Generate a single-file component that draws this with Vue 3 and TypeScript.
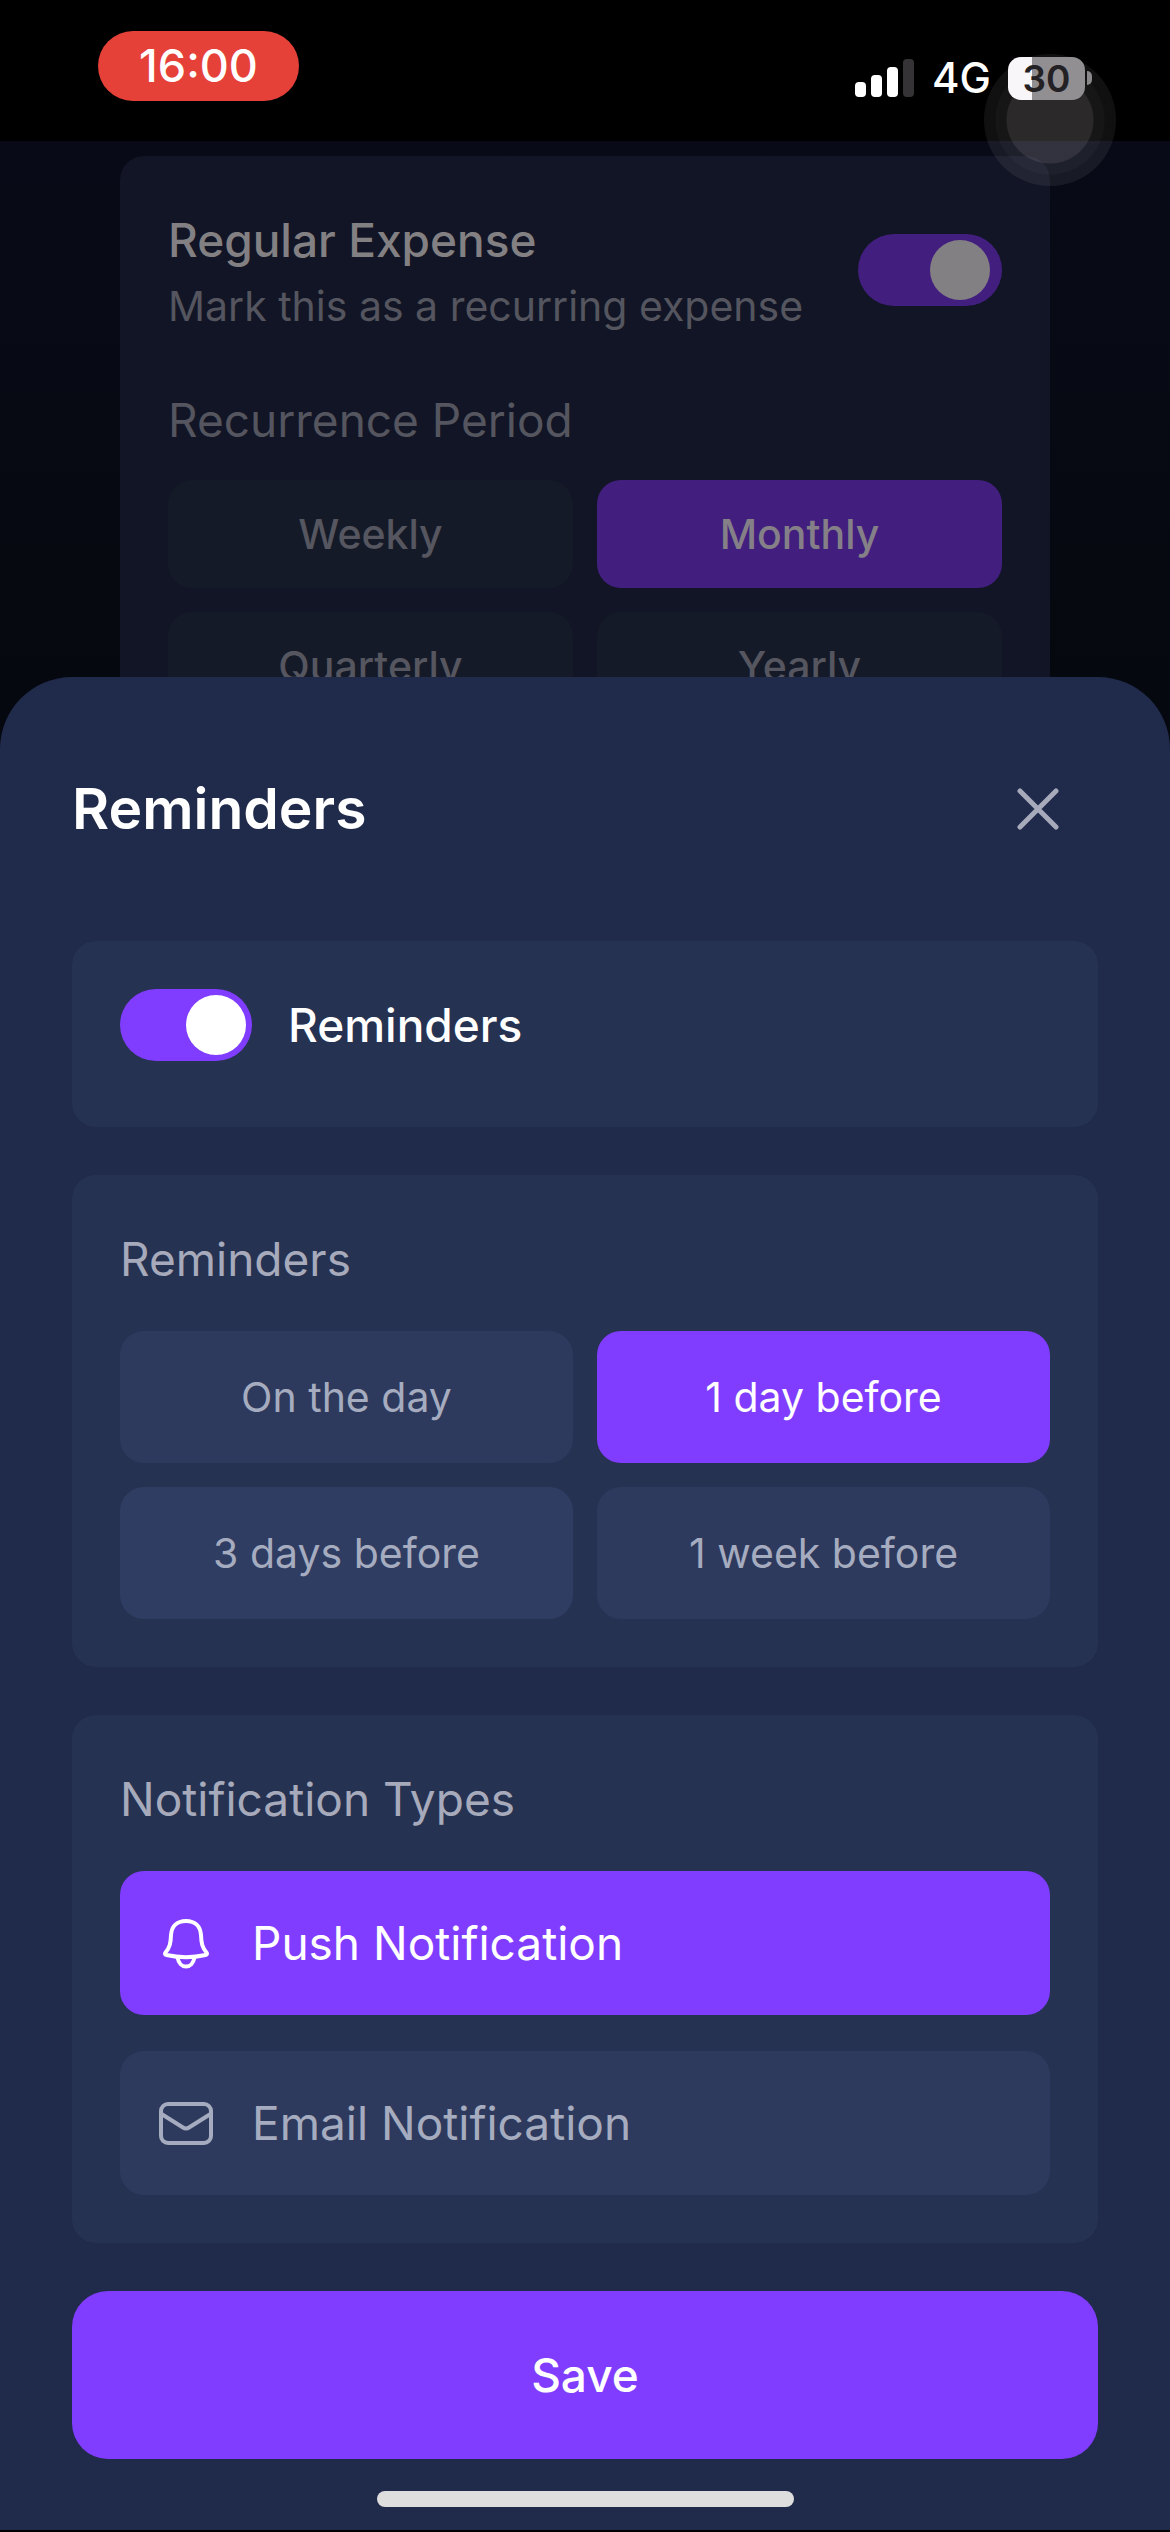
<script setup lang="ts">
import { ref } from 'vue'

interface Option {
  id: string
  label: string
}

const periods: Option[] = [
  { id: 'weekly', label: 'Weekly' },
  { id: 'monthly', label: 'Monthly' },
  { id: 'quarterly', label: 'Quarterly' },
  { id: 'yearly', label: 'Yearly' },
]

const timings: Option[] = [
  { id: 'same-day', label: 'On the day' },
  { id: 'one-day', label: '1 day before' },
  { id: 'three-days', label: '3 days before' },
  { id: 'one-week', label: '1 week before' },
]

const isRegular = ref(true)
const period = ref('monthly')
const remindersOn = ref(true)
const timing = ref('one-day')
const recent = ref('three-days')
const push = ref(true)
const email = ref(false)

function pickTiming(id: string) {
  recent.value = timing.value
  timing.value = id
}
</script>

<template>
  <div class="screen">
    <div class="backdrop">
      <header class="status">
        <span class="clock">16:00</span>
        <div class="indicators">
          <svg class="signal" viewBox="0 0 60 38" aria-hidden="true">
            <rect x="0" y="23" width="11" height="15" rx="4" fill="#fff" />
            <rect x="16" y="16" width="11" height="22" rx="4" fill="#fff" />
            <rect x="32" y="8" width="11" height="30" rx="4" fill="#fff" />
            <rect x="48" y="0" width="11" height="38" rx="4" fill="#353336" />
          </svg>
          <span class="network">4G</span>
          <span class="power">
            <span class="assist" aria-hidden="true"></span>
            <span class="battery">30</span>
            <span class="nub"></span>
          </span>
        </div>
      </header>

      <main class="page">
        <section class="expense">
          <div class="expense-head">
            <label for="regular" class="expense-text">
              <span class="expense-title">Regular Expense</span>
              <span class="expense-note">Mark this as a recurring expense</span>
            </label>
            <input id="regular" v-model="isRegular" type="checkbox" class="switch dimmed" />
          </div>
          <h2 class="period-title">Recurrence Period</h2>
          <div class="choices">
            <button
              v-for="p in periods"
              :key="p.id"
              type="button"
              class="period"
              :class="{ active: period === p.id }"
              :aria-pressed="period === p.id"
              @click="period = p.id"
            >
              {{ p.label }}
            </button>
          </div>
        </section>
      </main>
    </div>

    <section class="sheet" role="dialog" aria-labelledby="sheet-title">
      <header class="sheet-head">
        <h1 id="sheet-title">Reminders</h1>
        <button type="button" class="close" aria-label="Close">
          <svg viewBox="0 0 42 42" aria-hidden="true">
            <path d="M3 3 39 39M39 3 3 39" />
          </svg>
        </button>
      </header>

      <div class="cards">
        <div class="card toggle-card">
          <input id="reminders" v-model="remindersOn" type="checkbox" class="switch" />
          <label for="reminders">Reminders</label>
        </div>

        <div class="card">
          <h2>Reminders</h2>
          <div class="choices">
            <button
              v-for="t in timings"
              :key="t.id"
              type="button"
              class="timing"
              :class="{ active: timing === t.id, recent: recent === t.id }"
              :aria-pressed="timing === t.id"
              @click="pickTiming(t.id)"
            >
              {{ t.label }}
            </button>
          </div>
        </div>

        <div class="card">
          <h2>Notification Types</h2>
          <div class="channels">
            <button type="button" class="channel" :class="{ active: push }" :aria-pressed="push" @click="push = !push">
              <svg viewBox="0 0 54 54" aria-hidden="true">
                <path d="M27 5C17.500 5 12.500 11 12 19C11.700 27 11 31 6.500 36.500C5.500 37.800 6 38.700 7.500 39C20 41.800 34 41.800 46.500 39C48 38.700 48.500 37.800 47.500 36.500C43 31 42.300 27 42 19C41.500 11 36.500 5 27 5Z" />
                <path d="M18.500 41.500C19.500 47 23 50.500 27 50.500C31 50.500 34.500 47 35.500 41.500" />
              </svg>
              <span>Push Notification</span>
            </button>
            <button type="button" class="channel" :class="{ active: email }" :aria-pressed="email" @click="email = !email">
              <svg viewBox="0 0 54 54" aria-hidden="true">
                <rect x="2" y="8" width="50" height="39" rx="7" />
                <path d="M2.500 18 24 31.500Q27 33.500 30 31.500L51.500 18" />
              </svg>
              <span>Email Notification</span>
            </button>
          </div>
        </div>
      </div>

      <button type="button" class="save">Save</button>
      <div class="home-bar"></div>
    </section>
  </div>
</template>

<style>
body {
  background: #000;
}
</style>

<style scoped>
.screen {
  display: grid;
  min-height: 100vh;
  overflow: hidden;
  font-family: Inter, "Liberation Sans", sans-serif;
  color: #fff;
}

.screen *,
.screen *::before {
  box-sizing: border-box;
}

h1,
h2 {
  margin: 0;
}

button {
  border: 0;
  margin: 0;
  padding: 0;
  font-family: inherit;
  color: inherit;
  cursor: pointer;
}

/* Dimmed page behind the sheet */
.backdrop {
  grid-area: 1 / 1;
  display: flex;
  flex-direction: column;
}

.status {
  display: flex;
  align-items: flex-start;
  justify-content: space-between;
  height: 141px;
  padding: 31px 78px 0 98px;
  background: #000;
}

.clock {
  width: 201px;
  height: 70px;
  border-radius: 35px;
  background: #e64139;
  font-size: 45px;
  font-weight: 500;
  line-height: 70px;
  text-align: center;
}

.indicators {
  display: flex;
  align-items: center;
  gap: 17px;
  height: 94px;
}

.signal {
  width: 60px;
  height: 38px;
}

.network {
  font-size: 42px;
  font-weight: 500;
  line-height: 48px;
}

.power {
  position: relative;
  display: flex;
  align-items: center;
  gap: 2px;
}

.battery {
  position: relative;
  width: 77px;
  height: 43px;
  border-radius: 13px;
  background: linear-gradient(90deg, #f8f6f9 31%, #918f92 31%);
  color: #232124;
  font-size: 37px;
  font-weight: 600;
  line-height: 43px;
  text-align: center;
}

.nub {
  position: relative;
  width: 5px;
  height: 14px;
  border-radius: 0 7px 7px 0;
  background: #8a888b;
}

.assist {
  position: absolute;
  top: -3px;
  left: -24px;
  width: 132px;
  height: 132px;
  border-radius: 50%;
  background: radial-gradient(
    circle,
    rgba(255, 245, 250, 0.17) 43px,
    rgba(255, 245, 250, 0.09) 44px,
    rgba(255, 245, 250, 0.09) 54px,
    rgba(255, 245, 250, 0.065) 55px
  );
}

.page {
  flex: 1;
  padding: 15px 120px 0;
  background: linear-gradient(#080b17, #06080f 560px);
}

.expense {
  padding: 48px;
  border-radius: 24px;
  background: #121525;
}

.expense-head {
  display: flex;
  align-items: center;
  justify-content: space-between;
}

.expense-text {
  display: flex;
  flex-direction: column;
}

.expense-title {
  color: #828082;
  font-size: 46px;
  font-weight: 500;
  line-height: 72px;
}

.expense-note {
  color: #54555f;
  font-size: 41px;
  line-height: 60px;
}

.period-title {
  margin: 48px 0 24px;
  color: #54555f;
  font-size: 46px;
  font-weight: 400;
  line-height: 72px;
}

.choices {
  display: grid;
  grid-template-columns: 1fr 1fr;
  gap: 24px;
}

.period {
  height: 108px;
  border-radius: 24px;
  background: #151a28;
  color: #55565f;
  font-size: 41px;
  font-weight: 500;
}

.period.active {
  background: #421f7e;
  color: #858088;
}

.switch {
  appearance: none;
  display: flex;
  flex: none;
  align-items: center;
  width: 132px;
  height: 72px;
  margin: 0;
  padding: 0 6px;
  border-radius: 36px;
  background: #3a4569;
  cursor: pointer;
}

.switch::before {
  content: "";
  width: 60px;
  height: 60px;
  border-radius: 50%;
  background: #fff;
}

.switch:checked {
  justify-content: flex-end;
  background: #803dff;
}

.switch.dimmed {
  width: 144px;
  padding: 0 12px;
}

.switch.dimmed:checked {
  background: #421f7e;
}

.switch.dimmed::before {
  background: #828082;
}

/* Bottom sheet */
.sheet {
  grid-area: 1 / 1;
  z-index: 1;
  align-self: end;
  display: flex;
  flex-direction: column;
  padding: 72px 72px 23px;
  border-bottom: 2px solid #000;
  border-radius: 72px 72px 0 0;
  background: #202a4a;
}

.sheet-head {
  display: flex;
  align-items: center;
  justify-content: space-between;
  margin-bottom: 72px;
}

.sheet-head h1 {
  font-size: 57px;
  font-weight: 600;
  line-height: 72px;
}

.close {
  display: grid;
  place-items: center;
  width: 120px;
  height: 120px;
  background: none;
}

.close svg {
  width: 42px;
  height: 42px;
  fill: none;
  stroke: #a6aabb;
  stroke-width: 5;
  stroke-linecap: round;
}

.cards {
  display: flex;
  flex-direction: column;
  gap: 48px;
}

.card {
  padding: 48px;
  border-radius: 24px;
  background: #263252;
}

.card h2 {
  margin-bottom: 36px;
  color: #a6aabb;
  font-size: 46px;
  font-weight: 400;
  line-height: 72px;
}

.toggle-card {
  display: flex;
  gap: 36px;
  padding-bottom: 66px;
}

.toggle-card label {
  font-size: 46px;
  font-weight: 500;
  line-height: 72px;
}

.timing {
  height: 132px;
  border-radius: 24px;
  background: #2e3a5d;
  color: #a6acbf;
  font-size: 41px;
}

.timing.recent {
  background: #303d63;
}

.timing.active {
  background: #803dff;
  color: #fff;
}

.channels {
  display: flex;
  flex-direction: column;
  gap: 36px;
}

.channel {
  display: flex;
  align-items: center;
  gap: 39px;
  height: 144px;
  padding: 0 39px;
  border-radius: 24px;
  background: #2e3a5d;
  color: #a6acbf;
  font-size: 46px;
}

.channel.active {
  background: #803dff;
  color: #fff;
}

.channel svg {
  width: 54px;
  height: 54px;
  fill: none;
  stroke: currentColor;
  stroke-width: 4;
  stroke-linecap: round;
  stroke-linejoin: round;
}

.save {
  height: 168px;
  margin-top: 48px;
  border-radius: 36px;
  background: #803dff;
  font-size: 46px;
  font-weight: 500;
}

.home-bar {
  align-self: center;
  width: 417px;
  max-width: 60%;
  height: 16px;
  margin-top: 32px;
  border-radius: 8px;
  background: #dedede;
}
</style>
